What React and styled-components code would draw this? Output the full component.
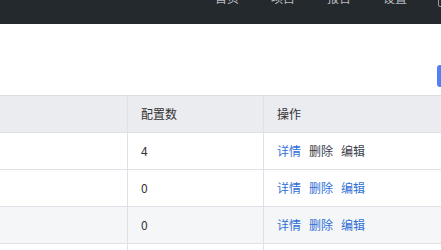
import styled, { createGlobalStyle } from 'styled-components';

const GlobalStyle = createGlobalStyle`
  body {
    margin: 0;
    background: #fff;
    font-family: "Noto Sans CJK SC", "Noto Sans", sans-serif;
    font-size: 12px;
    color: #333;
  }
`;

const Viewport = styled.div`
  width: 441px;
  height: 250px;
  overflow: hidden;
`;

const NavBar = styled.div`
  height: 24px;
  background: #24292d;
  display: flex;
  align-items: flex-start;
  padding-left: 215px;
  gap: 32px;
  overflow: hidden;
`;

const NavItem = styled.span`
  color: #b8bcc0;
  font-size: 12px;
  line-height: 16px;
  margin-top: -10px;
  white-space: nowrap;
`;

const NavBox = styled.span`
  flex: none;
  width: 20px;
  height: 14px;
  margin-top: -9px;
  margin-left: -1px;
  border: 1px solid #9a9ea2;
  border-radius: 2px;
`;

const Toolbar = styled.div`
  height: 71px;
  display: flex;
  align-items: flex-start;
  justify-content: flex-end;
`;

const AddButton = styled.button`
  flex: none;
  width: 64px;
  height: 22px;
  margin-top: 41px;
  margin-right: -60px;
  border: none;
  border-radius: 3px;
  background: #4f80f7;
  color: #fff;
  font-family: inherit;
  font-size: 12px;
`;

const Table = styled.div`
  border-top: 1px solid #dcdee3;
`;

const Row = styled.div`
  display: grid;
  grid-template-columns: 127px 136px 1fr;
  height: 37px;
  background: ${({ $head, $striped }) => ($head ? '#ebecf0' : $striped ? '#f5f6f8' : '#fff')};
  border-bottom: 1px solid #dfe1e6;
  box-sizing: border-box;
`;

const Cell = styled.div`
  display: flex;
  align-items: center;
  gap: 8px;
  padding-left: 13px;
  border-left: ${({ $first }) => ($first ? 'none' : '1px solid #dfe1e6')};
  color: #333;
  line-height: 16px;
`;

const Action = styled.a`
  color: ${({ $muted }) => ($muted ? '#3a3d4a' : '#2f6fd6')};
  text-decoration: none;
  cursor: pointer;
`;

const rows = [
  { count: 4, muted: true },
  { count: 0, muted: false },
  { count: 0, muted: false, striped: true },
  { count: '', muted: false, empty: true },
];

export default function App() {
  return (
    <Viewport>
      <GlobalStyle />
      <NavBar>
        <NavItem>首页</NavItem>
        <NavItem>项目</NavItem>
        <NavItem>报告</NavItem>
        <NavItem>设置</NavItem>
        <NavBox />
      </NavBar>
      <Toolbar>
        <AddButton>新增</AddButton>
      </Toolbar>
      <Table>
        <Row $head>
          <Cell $first />
          <Cell>配置数</Cell>
          <Cell>操作</Cell>
        </Row>
        {rows.map((r, i) => (
          <Row key={i} $striped={r.striped}>
            <Cell $first />
            <Cell>{r.count}</Cell>
            <Cell>
              {!r.empty && (
                <>
                  <Action>详情</Action>
                  <Action $muted={r.muted}>删除</Action>
                  <Action $muted={r.muted}>编辑</Action>
                </>
              )}
            </Cell>
          </Row>
        ))}
      </Table>
    </Viewport>
  );
}
